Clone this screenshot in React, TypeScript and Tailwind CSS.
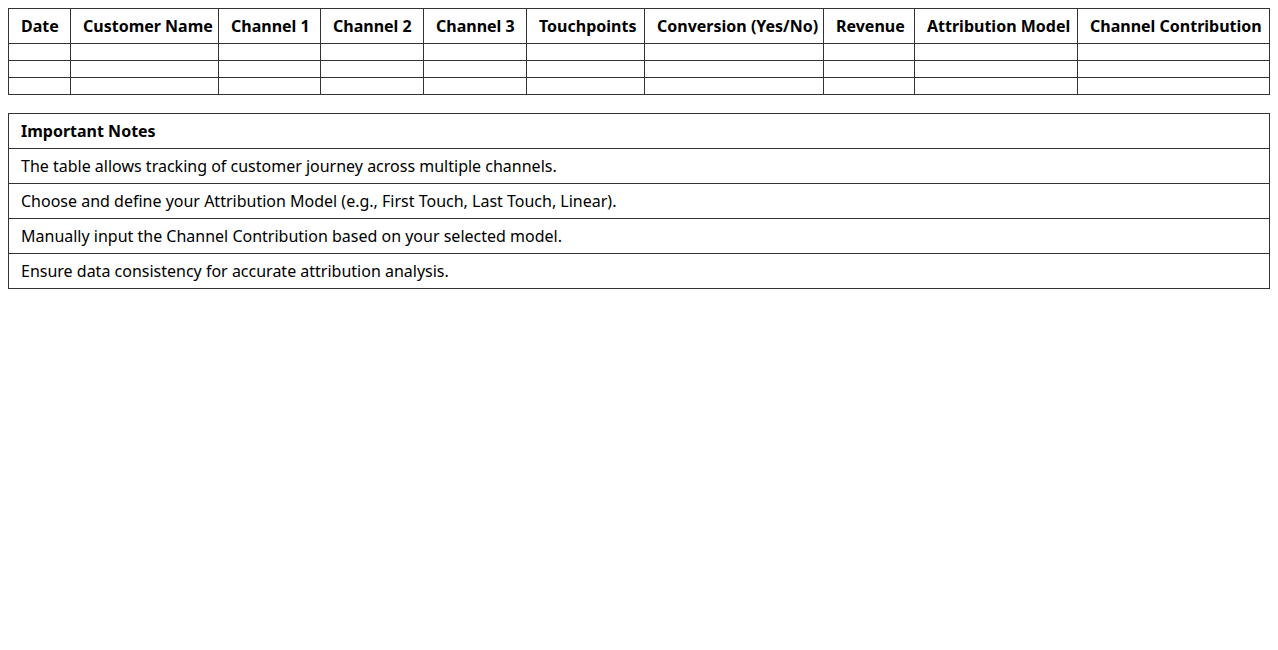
export default function App() {
  const cols: [string, string][] = [
    ["Date", "w-[62px]"],
    ["Customer Name", "w-[148px]"],
    ["Channel 1", "w-[102px]"],
    ["Channel 2", "w-[103px]"],
    ["Channel 3", "w-[103px]"],
    ["Touchpoints", "w-[118px]"],
    ["Conversion (Yes/No)", "w-[179px]"],
    ["Revenue", "w-[91px]"],
    ["Attribution Model", "w-[163px]"],
    ["Channel Contribution", ""],
  ]
  const notes = [
    "The table allows tracking of customer journey across multiple channels.",
    "Choose and define your Attribution Model (e.g., First Touch, Last Touch, Linear).",
    "Manually input the Channel Contribution based on your selected model.",
    "Ensure data consistency for accurate attribution analysis.",
  ]

  return (
    <div className="p-2 [font-family:'Liberation_Serif',serif] text-base text-black bg-white min-h-[650px]">
      <table className="w-full border-collapse table-fixed">
        <thead>
          <tr>
            {cols.map(([c, w]) => (
              <th key={c} className={`${w} border border-[#333] px-3 py-2 text-left font-bold leading-[18px] whitespace-nowrap`}>
                {c}
              </th>
            ))}
          </tr>
        </thead>
        <tbody>
          {[0, 1, 2].map((r) => (
            <tr key={r}>
              {cols.map(([c]) => (
                <td key={c} className="border border-[#333] px-3 py-2"></td>
              ))}
            </tr>
          ))}
        </tbody>
      </table>

      <table className="w-full border-collapse mt-[18px]">
        <tbody>
          <tr>
            <td className="border border-[#333] px-3 py-2 font-bold leading-[18px]">Important Notes</td>
          </tr>
          {notes.map((n) => (
            <tr key={n}>
              <td className="border border-[#333] px-3 py-2 leading-[18px]">{n}</td>
            </tr>
          ))}
        </tbody>
      </table>
    </div>
  )
}
